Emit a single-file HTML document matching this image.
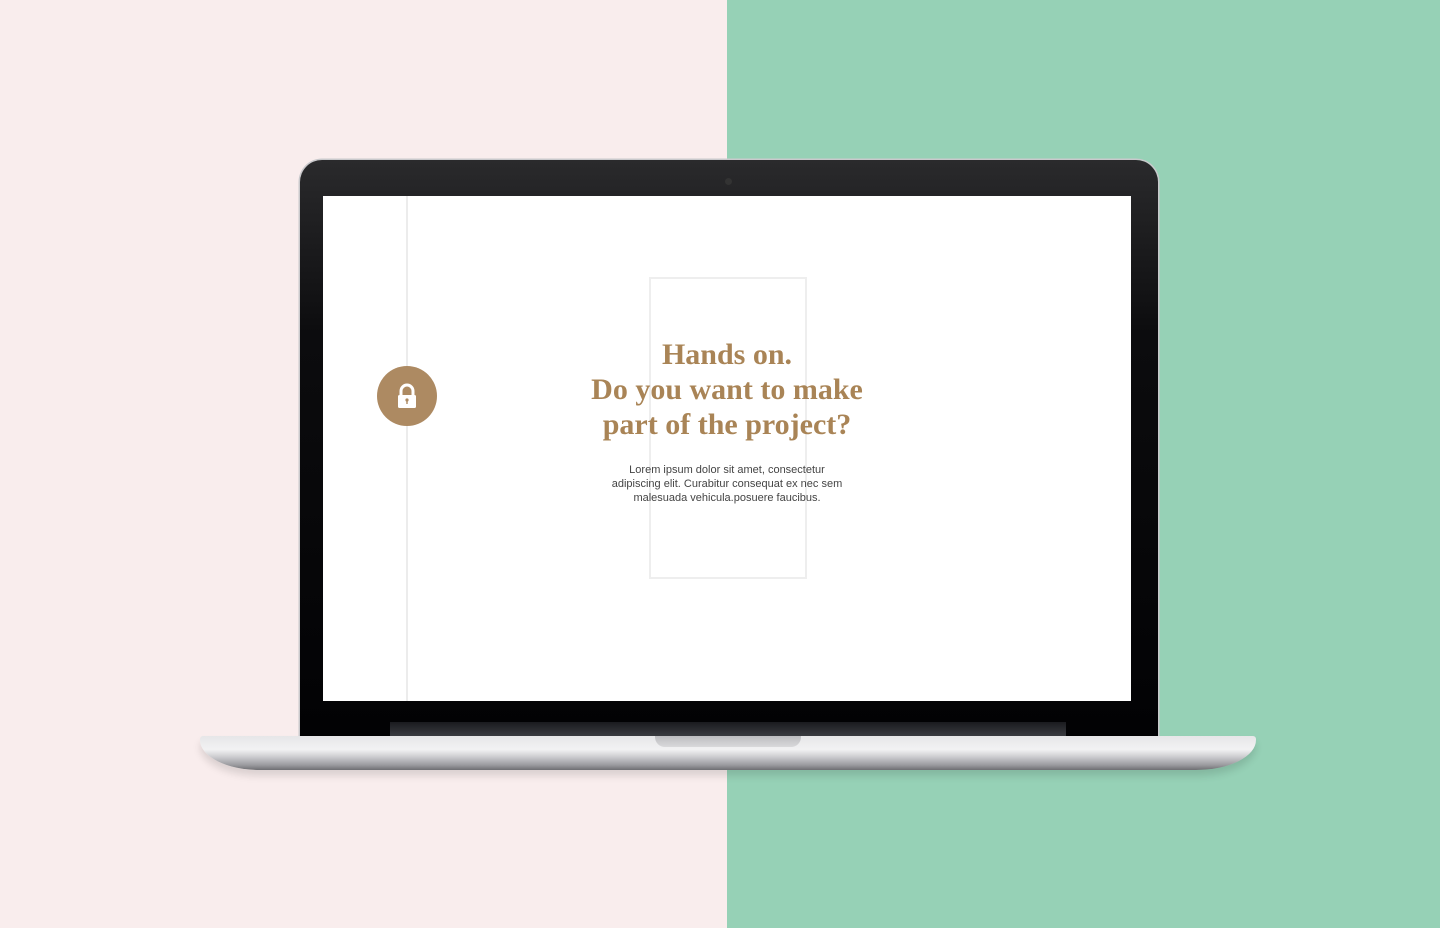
<!DOCTYPE html>
<html><head><style>
body{margin:0;width:1440px;height:928px;position:relative;overflow:hidden;background:#f9eded;font-family:"Liberation Sans",sans-serif}
.g{position:absolute;left:727px;top:0;width:713px;height:928px;background:#96d1b6}
.lid{position:absolute;left:300px;top:160px;width:858px;height:578px;border-radius:22px 22px 0 0;background:linear-gradient(180deg,#2a2a2c 0%,#0c0c0e 30%,#020204 100%);box-shadow:0 0 0 1.5px #c9c9cc}
.cam{position:absolute;left:725px;top:178px;width:7px;height:7px;border-radius:50%;background:#333}
.screen{position:absolute;left:323px;top:196px;width:808px;height:505px;background:#fff}
.vl{position:absolute;left:406px;top:196px;width:2px;height:505px;background:#ececec}
.lock{position:absolute;left:377px;top:366px;width:60px;height:60px;border-radius:50%;background:#ad8a62}
.rect{position:absolute;left:649px;top:277px;width:154px;height:298px;border:2px solid #eeeeee}
h1{position:absolute;left:527px;top:337px;width:400px;margin:0;text-align:center;font-family:"Liberation Serif",serif;font-weight:bold;font-size:30px;line-height:35px;color:#a98456}
p{position:absolute;left:577px;top:463px;width:300px;margin:0;text-align:center;font-size:11px;line-height:14px;color:#444}
.hinge{position:absolute;left:390px;top:722px;width:676px;height:14px;background:linear-gradient(#1a1b1f,#3a3b40)}
.base{position:absolute;left:200px;top:736px;width:1056px;height:34px;border-radius:3px 3px 60px 60px/3px 3px 30px 30px;background:linear-gradient(180deg,#e6e6e8 0%,#f2f2f3 40%,#cfcfd2 60%,#9c9ca0 85%,#6f6f73 100%);box-shadow:0 6px 8px rgba(0,0,0,.12)}
.notch{position:absolute;left:655px;top:736px;width:146px;height:11px;border-radius:0 0 10px 10px;background:linear-gradient(#bdbdc0,#d9d9db)}
</style></head><body>
<div class="g"></div>
<div class="lid"></div>
<div class="cam"></div>
<div class="screen"></div>
<div class="vl"></div>
<div class="rect"></div>
<div class="lock"><svg width="60" height="60" viewBox="0 0 60 60"><path d="M24 30v-5a6 6 0 0 1 12 0v5" fill="none" stroke="#fff" stroke-width="3"/><rect x="21" y="29" width="18" height="13" rx="1.5" fill="#fff"/><circle cx="30" cy="34" r="1.6" fill="#ad8a62"/><rect x="29.3" y="34" width="1.4" height="4" fill="#ad8a62"/></svg></div>
<h1>Hands on.<br>Do you want to make<br>part of the project?</h1>
<p>Lorem ipsum dolor sit amet, consectetur<br>adipiscing elit. Curabitur consequat ex nec sem<br>malesuada vehicula.posuere faucibus.</p>
<div class="hinge"></div>
<div class="base"></div>
<div class="notch"></div>
</body></html>
